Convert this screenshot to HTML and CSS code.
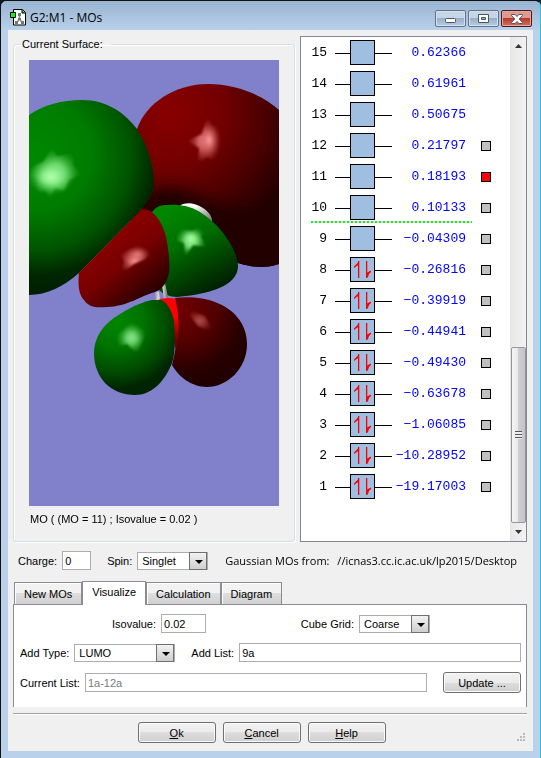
FILE: index.html
```html
<!DOCTYPE html>
<html lang="en">
<head>
<meta charset="utf-8">
<title>G2:M1 - MOs</title>
<link rel="stylesheet" href="styles.css">
</head>
<body>
<svg class="defs" width="0" height="0" aria-hidden="true">
  <symbol id="empty" viewBox="0 0 57 25">
    <path d="M0 13.5H57" stroke="#000"/>
    <rect x="15.5" y=".5" width="24" height="24" fill="#a0bfe0" stroke="#000"/>
  </symbol>
  <symbol id="pair" viewBox="0 0 57 25">
    <path d="M0 13.5H57" stroke="#000"/>
    <rect x="15.5" y=".5" width="24" height="24" fill="#a0bfe0" stroke="#000"/>
    <path d="M23 4h1.300v17H23zM31 4h1.300v17H31z" fill="#f00"/>
    <path d="M24 4v4.500h-1.500L19 11V9.500L22 6.500zM31 21v-5l2-1 3-1.500v1.500l-2 2-1 3z" fill="#f00"/>
  </symbol>
</svg>
<main class="window">
  <header class="titlebar">
    <svg class="app-icon" width="16" height="17" viewBox="0 0 16 17" aria-hidden="true">
      <path d="M3.500 .5H12.500L15.500 3.500V16H3.500z" fill="#fff" stroke="#000"/>
      <path d="M12 1v3h3" fill="#0c0" stroke="#000"/>
      <path d="M9.500 5v5l-3 4M9.500 10l3 4" fill="none" stroke="#888" stroke-width="1.500"/>
      <path d="M8 4h3v3H8zM5 12h3v3H5zM11 12h3v3h-3zM8 9h3v2H8z" fill="#777"/>
      <path d="M.5 3.500h5v5h-5z" fill="#0f0" stroke="#000"/>
    </svg>
    <h1>G2:M1 - MOs</h1>
    <div class="controls">
      <button type="button" aria-label="Minimize"><svg class="low" width="11" height="5" viewBox="0 0 11 5"><rect x=".5" y=".5" width="10" height="4" rx="1" fill="#fff" stroke="#4d5565"/></svg></button>
      <button type="button" aria-label="Maximize"><svg width="11" height="9" viewBox="0 0 11 9"><path fill-rule="evenodd" d="M.5.5h10v8H.5zM3.500 3.500v2h4v-2z" fill="#fff" stroke="#4d5565"/></svg></button>
      <button type="button" class="close" aria-label="Close"><svg width="12" height="10" viewBox="0 0 12 10"><path d="M.5.500h3.500L6 2.500 8 .5h3.500v1L8.200 5l3.300 3.500v1H8L6 7.500 4 9.500H.5v-1L3.800 5 .5 1.500z" fill="#fff" stroke="#50566b"/></svg></button>
    </div>
  </header>
  <div class="client">
    <div class="top">
      <fieldset class="surface">
        <legend>Current Surface:</legend>
        <svg class="scene" viewBox="0 0 250 446" role="img" aria-label="Molecular orbital surface">
          <defs>
            <radialGradient id="g1" gradientUnits="userSpaceOnUse" cx="6" cy="95" r="140"><stop offset="0" stop-color="#008800"/><stop offset=".4" stop-color="#007c00"/><stop offset=".68" stop-color="#005400"/><stop offset=".86" stop-color="#002600"/><stop offset="1" stop-color="#001e00"/></radialGradient>
            <radialGradient id="r1" gradientUnits="userSpaceOnUse" cx="140" cy="52" r="150"><stop offset="0" stop-color="#880000"/><stop offset=".35" stop-color="#740000"/><stop offset=".65" stop-color="#4a0000"/><stop offset=".88" stop-color="#260000"/><stop offset="1" stop-color="#200000"/></radialGradient>
            <linearGradient id="r2" gradientUnits="userSpaceOnUse" x1="88" y1="175" x2="134" y2="232"><stop offset="0" stop-color="#880000"/><stop offset=".35" stop-color="#780000"/><stop offset=".75" stop-color="#420000"/><stop offset="1" stop-color="#200000"/></linearGradient>
            <linearGradient id="g2" gradientUnits="userSpaceOnUse" x1="140" y1="152" x2="182" y2="230"><stop offset="0" stop-color="#008600"/><stop offset=".4" stop-color="#006e00"/><stop offset=".75" stop-color="#004000"/><stop offset="1" stop-color="#002100"/></linearGradient>
            <radialGradient id="g3" gradientUnits="userSpaceOnUse" cx="88" cy="262" r="78"><stop offset="0" stop-color="#008700"/><stop offset=".35" stop-color="#007200"/><stop offset=".65" stop-color="#004a00"/><stop offset=".85" stop-color="#002500"/></radialGradient>
            <radialGradient id="r3" gradientUnits="userSpaceOnUse" cx="153" cy="250" r="82"><stop offset="0" stop-color="#700000"/><stop offset=".4" stop-color="#520000"/><stop offset=".75" stop-color="#280000"/><stop offset="1" stop-color="#200000"/></radialGradient>
            <linearGradient id="w" x1="0" y1="0" x2="1" y2="1"><stop offset=".3" stop-color="#fff"/><stop offset=".9" stop-color="#777"/></linearGradient>
            <linearGradient id="bond"><stop offset="0" stop-color="#999"/><stop offset=".45" stop-color="#fff"/><stop offset="1" stop-color="#666"/></linearGradient>
            <linearGradient id="atom" x1="0" y1="0" x2="0" y2="1"><stop offset=".35" stop-color="#f00"/><stop offset=".8" stop-color="#700000"/></linearGradient>
            <radialGradient id="hg"><stop offset="0" stop-color="#b4ffb4"/><stop offset=".35" stop-color="#8cf08c" stop-opacity=".9"/><stop offset="1" stop-color="#30b030" stop-opacity="0"/></radialGradient>
            <radialGradient id="hr"><stop offset="0" stop-color="#ffa0a0"/><stop offset=".35" stop-color="#e07070" stop-opacity=".85"/><stop offset="1" stop-color="#a03030" stop-opacity="0"/></radialGradient>
            <clipPath id="red-lobe"><path d="M108 69C117 43 146 24 179 24C208 24 235 36 250 50V204C236 209 222 207 209 203L100 160z"/></clipPath>
            <filter id="dim" x="-50%" y="-50%" width="200%" height="200%"><feGaussianBlur stdDeviation="7"/></filter>
            <filter id="glow" x="-50%" y="-50%" width="200%" height="200%"><feGaussianBlur stdDeviation="1"/></filter>
          </defs>
          <rect width="250" height="446" fill="#8080cb"/>
          <g clip-path="url(#red-lobe)">
            <rect x="90" width="160" height="220" fill="url(#r1)"/>
            <path d="M112 138Q140 118 172 138Q215 158 262 150V225H190L100 170z" fill="#200000" filter="url(#dim)"/>
          </g>
          <path d="M151 146C154 142 166 142 174 148C180 152 184 157 183 163L168 162z" fill="url(#w)"/>
          <path d="M0 55C14 45 34 40 53 40C78 40 96 53 108 69C118 84 125 106 125 123C125 134 118 142 113 149L50 213C35 226 18 235 0 235z" fill="url(#g1)"/>
          <path d="M122 154C126 147 130 145 138 145C162 143 174 153 185 163C198 175 209 194 209 206C209 218 198 226 185 230C173 234 159 236 148 237Q137 237 130 230z" fill="url(#g2)"/>
          <path d="M126 231l4 1 1 10h-4zM133 225l3-2 3 14-4 2z" fill="url(#bond)"/>
          <path d="M126 241Q136 236 148 239Q153 265 147 290L138 260z" fill="url(#atom)"/>
          <path d="M113 149C125 149 133 162 137 177C140 191 141 205 140 213C138 222 134 229 126 232C114 235 97 247 78 247C66 248 60 247 55 240C49 234 49 222 50 213z" fill="url(#r2)"/>
          <path d="M146 238C160 236 176 238 186 242C205 249 218 264 218 284C218 309 198 327 178 327C162 327 149 316 143 305Q153 266 146 238z" fill="url(#r3)"/>
          <path d="M146 239Q153 265 147 290Q148 260 135 239z" fill="url(#atom)"/>
          <path d="M123 240C109 243 94 251 81 261C71 269 65 281 65 293C65 318 82 335 106 335C126 335 138 316 143 303C147 291 146 273 145 261C143 251 137 240 131 240z" fill="url(#g3)"/>
          <g filter="url(#glow)">
            <path d="M23 88l5 8 18-3-2 11 8 11-12 5-5 11-9-3-5 11-5-9-10 5 3-15-9-4V108l14-6z" fill="url(#hg)"/>
            <ellipse cx="22" cy="117" rx="24" ry="18" fill="url(#hg)"/>
            <path d="M158 81l15-7 5-17 6 9 9 1-2 13 2 12-5 13-9-8-10 5 1-14z" fill="url(#hr)"/>
            <ellipse cx="180" cy="80" rx="10" ry="17" fill="url(#hr)"/>
            <path d="M92 194l18-9 13 3-7 11-11 5-16 12 6-14z" fill="url(#hr)"/>
            <ellipse cx="109" cy="194" rx="13" ry="8" fill="url(#hr)" opacity=".6"/>
            <path d="M149 169l14 2 14-6-5 12 6 10-14-2-8 12-1-14-9-3z" fill="url(#hg)"/>
            <ellipse cx="162" cy="178" rx="11" ry="9" fill="url(#hg)" opacity=".6"/>
            <path d="M87 276l16-14 15 9-10 23-10-10-9 3z" fill="url(#hg)" opacity=".8"/>
            <path d="M155 248l21 8 10 18-17-8z" fill="url(#hr)" opacity=".5"/>
          </g>
        </svg>
        <p class="caption">MO ( (MO = 11) ; Isovalue = 0.02 )</p>
      </fieldset>
      <section class="levels" aria-label="Orbital energies">
        <table>
          <tbody>
            <tr><th scope="row">15</th><td class="box"><svg><use href="#empty"/></svg></td><td class="energy">0.62366</td><td></td></tr>
            <tr><th scope="row">14</th><td class="box"><svg><use href="#empty"/></svg></td><td class="energy">0.61961</td><td></td></tr>
            <tr><th scope="row">13</th><td class="box"><svg><use href="#empty"/></svg></td><td class="energy">0.50675</td><td></td></tr>
            <tr><th scope="row">12</th><td class="box"><svg><use href="#empty"/></svg></td><td class="energy">0.21797</td><td class="mark"><input type="radio" name="mo" aria-label="MO 12"></td></tr>
            <tr><th scope="row">11</th><td class="box"><svg><use href="#empty"/></svg></td><td class="energy">0.18193</td><td class="mark"><input type="radio" name="mo" aria-label="MO 11" checked></td></tr>
            <tr class="gap"><th scope="row">10</th><td class="box"><svg><use href="#empty"/></svg></td><td class="energy">0.10133</td><td class="mark"><input type="radio" name="mo" aria-label="MO 10"></td></tr>
            <tr><th scope="row">9</th><td class="box"><svg><use href="#empty"/></svg></td><td class="energy">−0.04309</td><td class="mark"><input type="radio" name="mo" aria-label="MO 9"></td></tr>
            <tr><th scope="row">8</th><td class="box"><svg><use href="#pair"/></svg></td><td class="energy">−0.26816</td><td class="mark"><input type="radio" name="mo" aria-label="MO 8"></td></tr>
            <tr><th scope="row">7</th><td class="box"><svg><use href="#pair"/></svg></td><td class="energy">−0.39919</td><td class="mark"><input type="radio" name="mo" aria-label="MO 7"></td></tr>
            <tr><th scope="row">6</th><td class="box"><svg><use href="#pair"/></svg></td><td class="energy">−0.44941</td><td class="mark"><input type="radio" name="mo" aria-label="MO 6"></td></tr>
            <tr><th scope="row">5</th><td class="box"><svg><use href="#pair"/></svg></td><td class="energy">−0.49430</td><td class="mark"><input type="radio" name="mo" aria-label="MO 5"></td></tr>
            <tr><th scope="row">4</th><td class="box"><svg><use href="#pair"/></svg></td><td class="energy">−0.63678</td><td class="mark"><input type="radio" name="mo" aria-label="MO 4"></td></tr>
            <tr><th scope="row">3</th><td class="box"><svg><use href="#pair"/></svg></td><td class="energy">−1.06085</td><td class="mark"><input type="radio" name="mo" aria-label="MO 3"></td></tr>
            <tr><th scope="row">2</th><td class="box"><svg><use href="#pair"/></svg></td><td class="energy">−10.28952</td><td class="mark"><input type="radio" name="mo" aria-label="MO 2"></td></tr>
            <tr><th scope="row">1</th><td class="box"><svg><use href="#pair"/></svg></td><td class="energy">−19.17003</td><td class="mark"><input type="radio" name="mo" aria-label="MO 1"></td></tr>
          </tbody>
        </table>
        <div class="scrollbar" aria-hidden="true">
          <svg width="15" height="18" viewBox="0 0 15 18"><path d="M4 11l3.500-4 3.500 4z" fill="#333"/></svg>
          <div class="track"></div>
          <div class="thumb"><i></i></div>
          <svg width="15" height="18" viewBox="0 0 15 18"><path d="M4 7l3.500 4L11 7z" fill="#333"/></svg>
        </div>
      </section>
    </div>

    <form class="molecule">
      <label for="charge">Charge:</label><input id="charge" class="w-xs" type="text" value="0">
      <label class="spin" for="spin">Spin:</label><span class="select w-m"><select id="spin"><option>Singlet</option></select></span>
      <p class="source"><span>Gaussian MOs from:</span> <span class="path">//icnas3.cc.ic.ac.uk/lp2015/Desktop</span></p>
    </form>

    <div class="tabs" role="tablist">
      <button type="button" role="tab">New MOs</button>
      <button type="button" role="tab" aria-selected="true">Visualize</button>
      <button type="button" role="tab">Calculation</button>
      <button type="button" role="tab">Diagram</button>
    </div>
    <form class="panel">
      <div class="row first">
        <label for="iso">Isovalue:</label><input id="iso" class="w-s" type="text" value="0.02">
        <label class="cube" for="cube">Cube Grid:</label><span class="select w-m"><select id="cube"><option>Coarse</option></select></span>
      </div>
      <div class="row">
        <label for="type">Add Type:</label><span class="select w-l"><select id="type"><option>LUMO</option></select></span>
        <label class="add" for="add">Add List:</label><input id="add" class="grow" type="text" value="9a">
      </div>
      <div class="row">
        <label for="list">Current List:</label><input id="list" class="grow" type="text" value="1a-12a" disabled>
        <button type="button" class="push update">Update ...</button>
      </div>
    </form>
    <footer>
      <button type="button" class="push"><u>O</u>k</button>
      <button type="button" class="push"><u>C</u>ancel</button>
      <button type="button" class="push"><u>H</u>elp</button>
      <svg class="grip" width="10" height="10" viewBox="0 0 10 10" aria-hidden="true"><path d="M6 0h2v2H6zM3 3h2v2H3zM6 3h2v2H6zM0 6h2v2H0zM3 6h2v2H3zM6 6h2v2H6z" fill="#bbb"/></svg>
    </footer>
  </div>
</main>
</body>
</html>
```
FILE: styles.css
```css
* { box-sizing: border-box; }
body {
  margin: 0;
  background: #101820;
  color: #000;
  font: 12px/16px "Liberation Sans", Arial, sans-serif;
}
button, input, select { font: inherit; color: inherit; margin: 0; }
h1, p { margin: 0; font-weight: normal; }
.defs { display: block; width: 0; height: 0; }

.window {
  min-height: 100vh;
  padding: 0 7px 7px;
  background: linear-gradient(#99b4d1, #b9d1ea 30px);
  border: 1px solid #111;
  border-right-color: #22c4dd;
  border-bottom-color: #22c4dd;
  border-radius: 6px 6px 0 0;
}
.titlebar { display: flex; height: 29px; gap: 4px; padding: 8px 1px 0 2px; }
h1 { font: 12px/18px "Open Sans", "Noto Sans", sans-serif; }
.controls { display: flex; gap: 2px; margin: 1px 0 0 auto; }
.controls button {
  display: grid;
  place-items: center;
  width: 31px;
  height: 17px;
  padding: 0;
  border: 1px solid #61738c;
  border-radius: 2px;
  box-shadow: inset 0 0 0 1px #d4e0ee;
  background: linear-gradient(#c6d5e6 50%, #98afc9 50%, #b9cde3);
}
.controls .low { align-self: end; margin-bottom: 3px; }
.controls .close {
  border-color: #4b1a20;
  box-shadow: inset 0 0 0 1px #e5a79d;
  background: linear-gradient(#dd9a8e 50%, #b83a2b 50%, #d0705c);
}

.client { background: #f0f0f0; padding: 6px 6px 8px 5px; }
.top { display: grid; grid-template-columns: minmax(0, 1fr) 227px; gap: 5px; }
.surface {
  min-width: 0;
  margin: 0;
  padding: 8px 15px 14px;
  border: 1px solid #d5dfe5;
  border-radius: 3px;
  box-shadow: inset 1px 1px #fff, 1px 1px #fff;
}
legend { padding: 0 8px 0 1px; margin-left: -8px; }
.surface, .caption, .molecule, .tabs, .panel, footer { font-size: 11px; }
.scene { display: block; width: 100%; }
.caption { padding: 5px 0 0 1px; }

.levels {
  display: flex;
  border: 1px solid #828790;
  background: #fff;
}
table { flex: 1; border-collapse: collapse; table-layout: fixed; align-self: flex-start; }
tr { height: 31px; }
th, td { padding: 0; font: 13px/16px "Liberation Mono", monospace; }
th { width: 26px; text-align: right; }
.box { width: 65px; }
.box svg { display: block; width: 57px; height: 25px; margin-left: 8px; }
.energy { width: 74px; text-align: right; color: #00f; }
.mark { text-align: left; }
.mark input {
  appearance: none;
  display: block;
  width: 10px;
  height: 10px;
  margin-left: 15px;
  border: 1px solid #000;
  background: #c0c0c0;
}
.mark input:checked { background: #f00; }
.gap {
  background: repeating-linear-gradient(90deg, #0f0 0 2px, transparent 2px 4px) 10px 100% / 161px 2px no-repeat;
}
.scrollbar {
  display: flex;
  flex-direction: column;
  width: 16px;
  border-left: 1px solid #e3e3e3;
  background: linear-gradient(90deg, #e8e8e8, #f2f2f2);
}
.track { flex: 292; }
.thumb {
  flex: 174;
  display: grid;
  place-items: center;
  border: 1px solid #979797;
  border-radius: 2px;
  background: linear-gradient(90deg, #f5f5f5, #e9e9e9 45%, #cfcfd1 50%, #c4c4c6);
}
.thumb i { width: 7px; height: 8px; background: repeating-linear-gradient(#555 0 1px, #eee 1px 3px); }

input[type="text"], select {
  min-width: 0;
  border: 1px solid #abadb3;
  border-radius: 0;
  background: #fff;
}
input[type="text"] { height: 19px; padding: 0 2px; }
input:disabled { color: #7a7a7a; }
.select { display: grid; }
.select::after {
  content: "";
  grid-area: 1 / 1;
  justify-self: end;
  align-self: center;
  width: 16px;
  height: 16px;
  margin-right: 1px;
  border: 1px solid #707070;
  background: linear-gradient(#f2f2f2, #cfcfcf);
  pointer-events: none;
}
.select::before {
  content: "";
  grid-area: 1 / 1;
  z-index: 1;
  justify-self: end;
  align-self: center;
  margin: 2px 5px 0 0;
  border: solid transparent;
  border-width: 4px 4px 0;
  border-top-color: #000;
  pointer-events: none;
}
.select select { grid-area: 1 / 1; appearance: none; width: 100%; height: 18px; padding: 0 18px 1px 4px; }
.w-xs { width: 29px; }
.w-s { width: 45px; }
.w-m { width: 71px; }
.w-l { width: 101px; }
.grow { flex: 1; }
label { margin-right: 5px; white-space: nowrap; }

.molecule { display: flex; align-items: center; padding: 9px 5px 0; }
.spin { margin-left: 16px; }
.source { flex: 1; min-width: 0; margin-left: 17px; overflow: hidden; white-space: nowrap; }
.source, .path { font-family: "Open Sans", "Noto Sans", sans-serif; }
.path { margin-left: 5px; }

.tabs { display: flex; align-items: flex-end; padding: 11px 1px 0; }
.tabs button {
  height: 22px;
  padding: 0 8px;
  border: 1px solid #898c95;
  border-bottom: 0;
  background: linear-gradient(#f2f2f2 50%, #dedede 50%, #d0d0d0);
  box-shadow: inset 1px 1px #fff;
}
.tabs button { padding: 0 9px; }
.tabs [aria-selected] { height: 24px; margin-bottom: -1px; padding-bottom: 3px; background: #fff; z-index: 1; }
.panel {
  padding: 9px 5px 14px 6px;
  border: 1px solid #898c95;
  border-bottom: 0;
  background: #fff;
}
.row { display: flex; align-items: center; }
.row + .row { margin-top: 10px; }
.first { padding: 0 91px 0 92px; }
.cube { margin-left: auto; }
.add { margin-left: 16px; }

.push {
  width: 78px;
  height: 21px;
  padding: 0;
  border: 1px solid #707070;
  border-radius: 3px;
  background: linear-gradient(#f2f2f2, #ebebeb 50%, #dddddd 50%, #cfcfcf);
  box-shadow: inset 0 0 0 1px #fafafa;
}
.update { margin-left: 16px; }
footer {
  display: grid;
  grid-template-columns: 7fr auto auto auto 8fr;
  gap: 7px;
  margin-top: 6px;
  padding-top: 8px;
  border-top: 1px solid #a0a0a0;
  box-shadow: inset 0 1px #fff;
}
footer .push:first-child { grid-column: 2; }
.grip { justify-self: end; align-self: end; }
```
